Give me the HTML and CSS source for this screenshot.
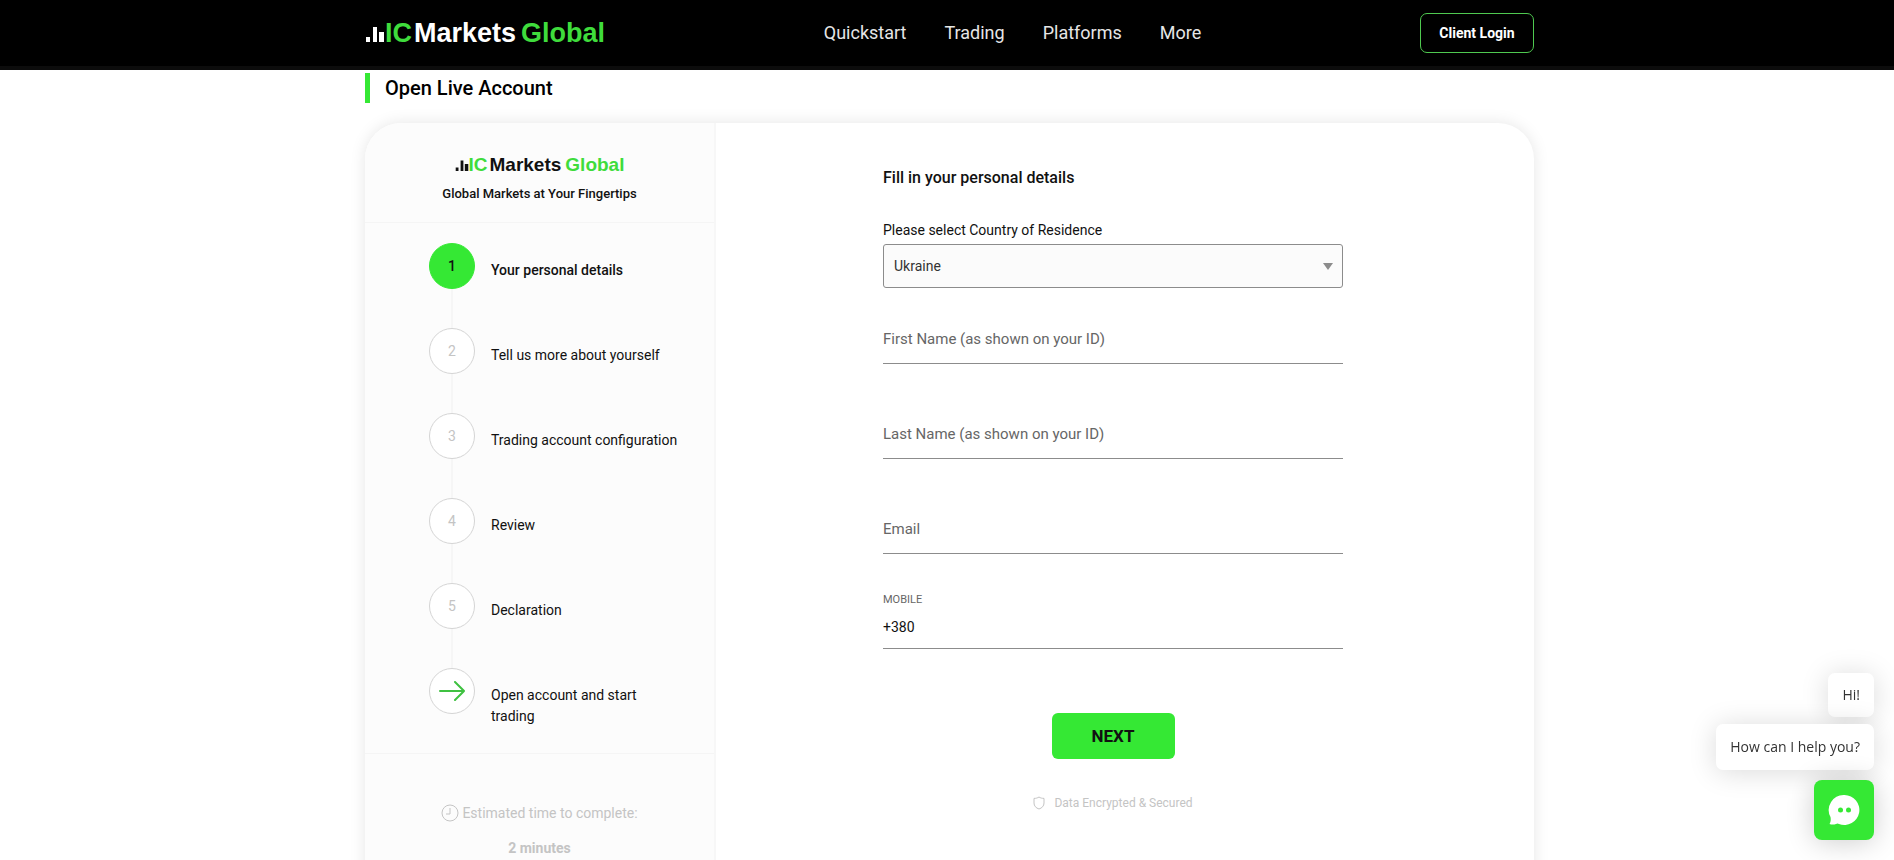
FILE: index.html
```html
<!DOCTYPE html>
<html lang="en">
<head>
  <meta charset="UTF-8">
  <meta name="viewport" content="width=device-width, initial-scale=1.0">
  <title>Open Live Account | IC Markets Global</title>
  <link rel="stylesheet" href="styles.css">
</head>
<body>
  <header class="header">
    <div class="container header-inner">
      <a href="#" class="logo logo-light">
        <svg class="logo-bars" viewBox="0 0 20 20" aria-hidden="true">
          <rect x="1" y="15" width="4" height="5"/>
          <rect x="8" y="5" width="4" height="15"/>
          <rect x="14" y="10" width="5" height="10"/>
        </svg>
        <span class="logo-green">IC</span>
        <span class="logo-name">Markets</span>
        <span class="logo-green">Global</span>
      </a>
      <nav class="nav-links">
        <a href="#" class="nav-link">Quickstart</a>
        <a href="#" class="nav-link">Trading</a>
        <a href="#" class="nav-link">Platforms</a>
        <a href="#" class="nav-link">More</a>
      </nav>
      <a href="#" class="login-button">Client Login</a>
    </div>
  </header>

  <main class="page">
    <div class="container">
      <h1 class="page-title">Open Live Account</h1>

      <div class="card">
        <aside class="sidebar">
          <div class="sidebar-head">
            <div class="logo logo-small">
              <svg class="logo-bars" viewBox="0 0 20 20" aria-hidden="true">
                <rect x="1" y="15" width="4" height="5"/>
                <rect x="8" y="5" width="4" height="15"/>
                <rect x="14" y="10" width="5" height="10"/>
              </svg>
              <span class="logo-green">IC</span>
              <span class="logo-name">Markets</span>
              <span class="logo-green">Global</span>
            </div>
            <p class="tagline">Global Markets at Your Fingertips</p>
          </div>

          <ol class="steps">
            <li class="step active">
              <span class="step-number">1</span>
              <span class="step-text">Your personal details</span>
            </li>
            <li class="step">
              <span class="step-number">2</span>
              <span class="step-text">Tell us more about yourself</span>
            </li>
            <li class="step">
              <span class="step-number">3</span>
              <span class="step-text">Trading account configuration</span>
            </li>
            <li class="step">
              <span class="step-number">4</span>
              <span class="step-text">Review</span>
            </li>
            <li class="step">
              <span class="step-number">5</span>
              <span class="step-text">Declaration</span>
            </li>
            <li class="step">
              <span class="step-number">
                <svg class="arrow" viewBox="0 0 26 20" aria-hidden="true">
                  <path d="M1 10H25M16 1l9 9-9 9"/>
                </svg>
              </span>
              <span class="step-text">Open account and start trading</span>
            </li>
          </ol>

          <div class="estimate">
            <p class="estimate-label">
              <svg class="clock" viewBox="0 0 18 18" aria-hidden="true">
                <circle cx="9" cy="9" r="8"/>
                <path d="M9 4v6H5"/>
              </svg>
              Estimated time to complete:
            </p>
            <p class="estimate-time">2 minutes</p>
          </div>
        </aside>

        <section class="form-section">
          <form class="form">
            <h2 class="form-title">Fill in your personal details</h2>

            <label for="country" class="country-label">Please select Country of Residence</label>
            <div class="select-wrap">
              <select id="country" class="country-select">
                <option>Ukraine</option>
              </select>
            </div>

            <div class="field">
              <input type="text" class="field-input" aria-label="First Name" placeholder="First Name (as shown on your ID)">
            </div>
            <div class="field">
              <input type="text" class="field-input" aria-label="Last Name" placeholder="Last Name (as shown on your ID)">
            </div>
            <div class="field">
              <input type="email" class="field-input" aria-label="Email" placeholder="Email">
            </div>
            <div class="field">
              <label for="mobile" class="mobile-label">MOBILE</label>
              <input type="tel" id="mobile" class="field-input mobile-input" value="+380">
            </div>

            <button type="submit" class="next-button">NEXT</button>

            <p class="secured">
              <svg class="shield" viewBox="0 0 12 14" aria-hidden="true">
                <path d="M6 1C4.500 2 3 2.400 1 2.400V7c0 3 2 5 5 6 3-1 5-3 5-6V2.400C9 2.400 7.500 2 6 1z"/>
              </svg>
              Data Encrypted &amp; Secured
            </p>
          </form>
        </section>
      </div>
    </div>
  </main>

  <div class="chat">
    <p class="chat-bubble chat-hi">Hi!</p>
    <p class="chat-bubble">How can I help you?</p>
    <button type="button" class="chat-button" aria-label="Open chat">
      <svg class="chat-icon" viewBox="0 0 32 32" aria-hidden="true">
        <path fill="#fff" d="M16.500 1a15 15 0 1 1-5.500 29c-1-.8-2-.8-3 0-2 .8-4.500.8-6.500 0 1.200-2 1.500-4 1-7A15 15 0 0 1 16.500 1z"/>
        <circle cx="12.500" cy="16" r="2.500" fill="#35e834"/>
        <circle cx="20.500" cy="16" r="2.500" fill="#35e834"/>
      </svg>
    </button>
  </div>
</body>
</html>
```

FILE: styles.css
```css
/* Global Styles */
* {
    margin: 0;
    padding: 0;
    box-sizing: border-box;
}

body {
    font-family: Roboto, "Liberation Sans", sans-serif;
    font-size: 14px;
    color: #111;
    background-color: #fff;
}

a {
    text-decoration: none;
}

.container {
    max-width: 1169px;
    margin: 0 auto;
}

/* Header */
.header {
    position: sticky;
    top: 0;
    z-index: 10;
    height: 70px;
    padding-left: 5px;
    background-color: #000;
    border-bottom: 4px solid #0c0c0c;
}

.header-inner {
    height: 66px;
    display: flex;
    justify-content: space-between;
    align-items: center;
}

.logo {
    display: flex;
    align-items: baseline;
    font-family: "Liberation Sans", Arial, sans-serif;
    font-size: 27px;
    line-height: 30px;
    font-weight: 700;
    color: #111;
}

.logo-light {
    color: #fff;
}

.logo-bars {
    width: 20px;
    height: 20px;
    fill: currentColor;
}

.logo-green {
    color: #3fdc3c;
}

.logo-name {
    margin: 0 5px 0 2px;
}

.logo-small {
    font-size: 19px;
    line-height: 22px;
}

.logo-small .logo-bars {
    width: 14px;
    height: 14px;
}

.logo-small .logo-name {
    margin: 0 4px 0 2px;
}

.nav-links {
    display: flex;
    gap: 38px;
}

.nav-link {
    font-size: 18px;
    line-height: 24px;
    color: #e6e6e6;
}

.login-button {
    width: 114px;
    height: 40px;
    border: 1px solid #4fc950;
    border-radius: 7px;
    font-size: 14px;
    line-height: 38px;
    font-weight: 700;
    text-align: center;
    color: #fff;
}

/* Page */
.page {
    padding: 3px 0 60px 5px;
}

.page-title {
    padding-left: 15px;
    border-left: 5px solid #35e834;
    font-size: 20px;
    line-height: 30px;
    font-weight: 500;
    color: #000;
}

.card {
    display: flex;
    margin-top: 20px;
    border-radius: 36px;
    overflow: hidden;
    background-color: #fff;
    box-shadow: 0 0 16px rgba(0, 0, 0, 0.1);
}

/* Sidebar */
.sidebar {
    flex: none;
    width: 351px;
    background-color: #fcfcfc;
    border-right: 2px solid #f7f7f7;
}

.sidebar-head {
    display: flex;
    flex-direction: column;
    align-items: center;
    padding: 31px 0 18px;
    border-bottom: 1px solid #f5f5f5;
}

.tagline {
    margin-top: 8px;
    font-size: 13px;
    line-height: 20px;
    font-weight: 500;
}

.steps {
    list-style: none;
    padding: 20px 32px 0 64px;
    border-bottom: 1px solid #f5f5f5;
}

.step {
    display: flex;
    gap: 16px;
    height: 85px;
    background: linear-gradient(#f6f6f6, #f6f6f6) 22px 0 / 2px 100% no-repeat;
}

.step:last-child {
    background: none;
}

.step-number {
    flex: none;
    display: flex;
    justify-content: center;
    align-items: center;
    width: 46px;
    height: 46px;
    border: 1px solid #d5d5d5;
    border-radius: 50%;
    background-color: #fff;
    color: #c4c4c4;
}

.step-text {
    padding-top: 17px;
    line-height: 21px;
}

.step.active .step-number {
    border-color: #35e834;
    background-color: #35e834;
    color: #111;
    font-weight: 500;
}

.step.active .step-text {
    font-weight: 500;
}

.arrow {
    width: 26px;
    height: 20px;
    fill: none;
    stroke: #3fc141;
    stroke-width: 2;
    stroke-linecap: round;
}

.estimate {
    padding: 48px 0;
    text-align: center;
    color: #c4c4c4;
}

.estimate-label {
    display: flex;
    justify-content: center;
    align-items: center;
    gap: 3px;
    line-height: 22px;
}

.clock {
    width: 18px;
    height: 18px;
    fill: none;
    stroke: #c4c4c4;
}

.estimate-time {
    margin-top: 13px;
    line-height: 22px;
    font-weight: 700;
}

/* Form */
.form-section {
    flex: 1;
    display: flex;
    justify-content: center;
    padding: 44px 24px 0 0;
}

.form {
    width: 460px;
}

.form-title {
    font-size: 16px;
    line-height: 22px;
    font-weight: 500;
}

.country-label {
    display: block;
    margin-top: 31px;
    line-height: 20px;
}

.select-wrap {
    position: relative;
    margin: 4px 0 21px;
}

/* Drop-down arrow */
.select-wrap::after {
    content: "";
    position: absolute;
    right: 10px;
    top: 19px;
    border: 5px solid transparent;
    border-top: 7px solid #8c8c8c;
    border-bottom: none;
    pointer-events: none;
}

.country-select {
    appearance: none;
    display: block;
    width: 100%;
    height: 44px;
    padding: 0 10px;
    border: 1px solid #8c8c8c;
    border-radius: 3px;
    background-color: #fbfbfb;
    font-family: inherit;
    font-size: 14px;
    color: #333;
}

.field {
    display: flex;
    flex-direction: column;
    justify-content: flex-end;
    height: 55px;
    margin-bottom: 40px;
    border-bottom: 1px solid #8c8c8c;
}

.field-input {
    width: 100%;
    height: 48px;
    border: none;
    outline: none;
    background: none;
    font-family: inherit;
    font-size: 15px;
    color: #111;
}

.field-input::placeholder {
    color: #666;
}

.mobile-label {
    font-size: 11px;
    line-height: 12px;
    color: #666;
}

.mobile-input {
    height: 42px;
    font-size: 14px;
}

.next-button {
    display: block;
    width: 123px;
    height: 46px;
    margin: 64px auto 0;
    border: none;
    border-radius: 6px;
    background-color: #35e834;
    font-family: inherit;
    font-size: 17px;
    font-weight: 700;
    color: #111;
}

.secured {
    display: flex;
    justify-content: center;
    align-items: center;
    gap: 9px;
    margin-top: 34px;
    font-size: 12px;
    line-height: 20px;
    color: #c4c4c4;
}

.shield {
    width: 12px;
    height: 14px;
    fill: none;
    stroke: #c4c4c4;
}

/* Chat widget */
.chat {
    position: fixed;
    right: 20px;
    bottom: 20px;
    z-index: 20;
    display: flex;
    flex-direction: column;
    align-items: flex-end;
}

.chat-bubble {
    padding: 12px 14px;
    margin-bottom: 10px;
    border-radius: 7px;
    background-color: #fff;
    box-shadow: 0 2px 28px rgba(0, 0, 0, 0.15);
    font-family: "Open Sans", "Noto Sans", sans-serif;
    font-size: 14px;
    line-height: 22px;
    color: #333;
}

.chat-hi {
    padding: 11px 14px;
    margin-bottom: 7px;
}

.chat-button {
    display: flex;
    justify-content: center;
    align-items: center;
    width: 60px;
    height: 60px;
    border: none;
    border-radius: 8px;
    background-color: #35e834;
    box-shadow: 0 2px 28px rgba(0, 0, 0, 0.2);
}

.chat-icon {
    width: 32px;
    height: 32px;
}

@media (max-width: 991px) {
    .card {
        flex-direction: column;
    }

    .sidebar {
        width: 100%;
    }

    .nav-links {
        display: none;
    }
}
```
